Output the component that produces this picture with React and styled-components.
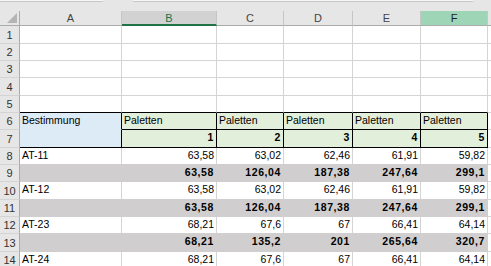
import React from 'react';
import styled, { createGlobalStyle } from 'styled-components';

const GlobalStyle = createGlobalStyle`
  html, body {
    margin: 0;
    padding: 0;
    background: #fff;
  }
  body {
    font-family: "Liberation Sans", Arial, sans-serif;
    overflow: hidden;
  }
`;

const GRID = '#d4d4d4';
const FILL = { blue: '#ddebf7', green: '#e2efda', gray: '#d0cece' };

const columns = [
  { key: 'A', width: 102 },
  { key: 'B', width: 95, state: 'active' },
  { key: 'C', width: 67 },
  { key: 'D', width: 69 },
  { key: 'E', width: 68 },
  { key: 'F', width: 67, state: 'selected' },
];

// row heights include the 1px bottom gridline
const heights = [18, 17, 17, 18, 17, 17, 18, 17, 17, 18, 17, 17, 18, 17];

const num = (text, bold) => ({ text, right: true, bold });

const dataRow = (label, values) => [{ text: label }, ...values.map((v) => num(v))];
const sumRow = (values) => [{ fill: 'gray' }, ...values.map((v) => ({ ...num(v, true), fill: 'gray' }))];

const rows = [
  [], [], [], [], [],
  [
    { text: 'Bestimmung', fill: 'blue', group: 'a' },
    ...['b', 'c', 'd', 'e', 'f'].map((g) => ({ text: 'Paletten', fill: 'green', group: g + '6' })),
  ],
  [
    { fill: 'blue', group: 'a' },
    ...['b', 'c', 'd', 'e', 'f'].map((g, i) => ({ ...num(String(i + 1), true), fill: 'green', group: g + '7' })),
  ],
  dataRow('AT-11', ['63,58', '63,02', '62,46', '61,91', '59,82']),
  sumRow(['63,58', '126,04', '187,38', '247,64', '299,1']),
  dataRow('AT-12', ['63,58', '63,02', '62,46', '61,91', '59,82']),
  sumRow(['63,58', '126,04', '187,38', '247,64', '299,1']),
  dataRow('AT-23', ['68,21', '67,6', '67', '66,41', '64,14']),
  sumRow(['68,21', '135,2', '201', '265,64', '320,7']),
  dataRow('AT-24', ['68,21', '67,6', '67', '66,41', '64,14']),
];

const cellAt = (r, c) => (rows[r] && rows[r][c]) || {};

// colour of the line between two neighbouring cells
const edge = (a, b) => {
  if ((a.group || b.group) && a.group !== b.group) return '#000';
  if (a.fill || b.fill) return FILL[a.fill || b.fill];
  return GRID;
};

const Page = styled.div`
  width: 491px;
  height: 266px;
  overflow: hidden;
  background: #fff;
`;

const Ribbon = styled.div`
  height: 11px;
  background: #e6e6e6;
  display: flex;
  align-items: flex-start;
  gap: 30px;
`;

const FieldEdge = styled.div`
  width: ${(p) => p.$w}px;
  height: 1px;
  background: #f7f7f7;
  border-bottom: 1px solid #c6c6c6;
`;

const Sheet = styled.div`
  display: grid;
  grid-template-columns: 20px ${(p) => p.$cols} 1fr;
  grid-template-rows: 15px ${(p) => p.$rows};
`;

const Corner = styled.div`
  background: #e6e6e6;
  border-right: 1px solid #ababab;
  border-bottom: 1px solid #ababab;
  position: relative;
  box-sizing: border-box;

  &::after {
    content: '';
    position: absolute;
    right: 2px;
    bottom: 2px;
    width: 0;
    height: 0;
    border-left: 10px solid transparent;
    border-bottom: 10px solid #b4b4b4;
  }
`;

const headBg = { active: '#d2d2d2', selected: '#9fd5b7' };

const ColHead = styled.div`
  box-sizing: border-box;
  background: ${(p) => headBg[p.$state] || '#e6e6e6'};
  border-right: 1px solid #c6c6c6;
  border-bottom: ${(p) => (p.$state === 'active' ? '2px solid #217346' : '1px solid #ababab')};
  color: ${(p) => (p.$state === 'active' ? '#217346' : p.$state === 'selected' ? '#1e1e1e' : '#444')};
  font-size: 11px;
  line-height: 14px;
  text-align: center;
`;

const RowHead = styled.div`
  box-sizing: border-box;
  background: #e6e6e6;
  border-right: 1px solid #ababab;
  border-bottom: 1px solid #d4d4d4;
  color: #333;
  font-size: 11px;
  display: flex;
  align-items: center;
  justify-content: center;
`;

const Cell = styled.div`
  box-sizing: border-box;
  min-width: 0;
  background: ${(p) => (p.$fill ? FILL[p.$fill] : '#fff')};
  border-right: 1px solid ${(p) => p.$br};
  border-bottom: 1px solid ${(p) => p.$bb};
  color: #000;
  font-size: 10.5px;
  line-height: 12px;
  font-weight: ${(p) => (p.$bold ? 700 : 400)};
  letter-spacing: ${(p) => (p.$bold ? '0.6px' : '0')};
  text-align: ${(p) => (p.$right ? 'right' : 'left')};
  padding: 1px 2px 0 2px;
  white-space: nowrap;
  overflow: hidden;
`;

export default function App() {
  const colTemplate = columns.map((c) => c.width + 'px').join(' ');
  const rowTemplate = heights.map((h) => h + 'px').join(' ');

  return (
    <Page>
      <GlobalStyle />
      <Ribbon>
        <FieldEdge $w={103} />
        <FieldEdge $w={340} />
      </Ribbon>
      <Sheet $cols={colTemplate} $rows={rowTemplate}>
        <Corner />
        {columns.map((c) => (
          <ColHead key={c.key} $state={c.state}>{c.key}</ColHead>
        ))}
        <ColHead />

        {heights.map((_, r) => (
          <React.Fragment key={r}>
            <RowHead>{r + 1}</RowHead>
            {[0, 1, 2, 3, 4, 5, 6].map((c) => {
              const cell = cellAt(r, c);
              return (
                <Cell
                  key={c}
                  $fill={cell.fill}
                  $bold={cell.bold}
                  $right={cell.right}
                  $br={edge(cell, cellAt(r, c + 1))}
                  $bb={edge(cell, cellAt(r + 1, c))}
                >
                  {cell.text}
                </Cell>
              );
            })}
          </React.Fragment>
        ))}
      </Sheet>
    </Page>
  );
}
